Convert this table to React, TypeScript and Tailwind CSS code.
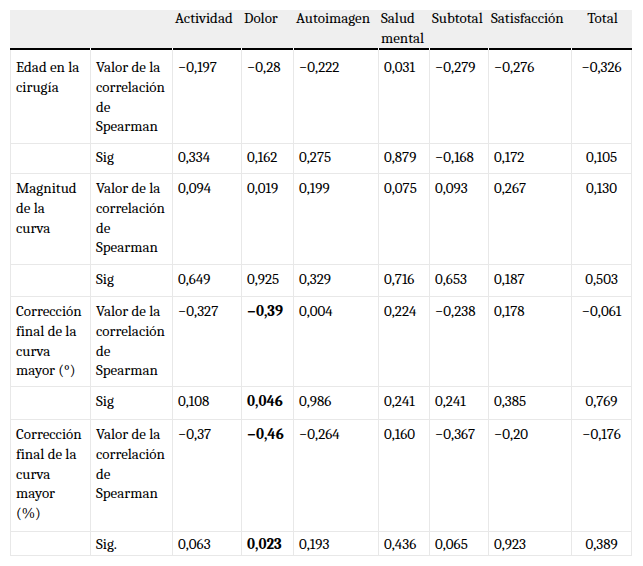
const COLS = [81, 82, 69, 52, 85, 51, 59, 83, 60]
const HEAD = [[], [], ['Actividad'], ['Dolor'], ['Autoimagen'], ['Salud', 'mental'], ['Subtotal'], ['Satisfacción'], ['Total']]
const KIND = ['Valor de la', 'correlación', 'de', 'Spearman']

type Row = {
  label: string[]
  kind: string[]
  vals: string[]
  bold?: boolean
  h: string
  pt: string
}

const ROWS: Row[] = [
  { label: ['Edad en la', 'cirugía'], kind: KIND, vals: ['−0,197', '−0,28', '−0,222', '0,031', '−0,279', '−0,276', '−0,326'], h: 'h-[94px]', pt: 'pt-[8px]' },
  { label: [], kind: ['Sig'], vals: ['0,334', '0,162', '0,275', '0,879', '−0,168', '0,172', '0,105'], h: 'h-[30px]', pt: 'pt-[4px]' },
  { label: ['Magnitud', 'de la', 'curva'], kind: KIND, vals: ['0,094', '0,019', '0,199', '0,075', '0,093', '0,267', '0,130'], h: 'h-[91px]', pt: 'pt-[5px]' },
  { label: [], kind: ['Sig'], vals: ['0,649', '0,925', '0,329', '0,716', '0,653', '0,187', '0,503'], h: 'h-[32px]', pt: 'pt-[5px]' },
  { label: ['Corrección', 'final de la', 'curva', 'mayor (°)'], kind: KIND, vals: ['−0,327', '−0,39', '0,004', '0,224', '−0,238', '0,178', '−0,061'], bold: true, h: 'h-[90px]', pt: 'pt-[5px]' },
  { label: [], kind: ['Sig'], vals: ['0,108', '0,046', '0,986', '0,241', '0,241', '0,385', '0,769'], bold: true, h: 'h-[33px]', pt: 'pt-[5px]' },
  { label: ['Corrección', 'final de la', 'curva', 'mayor', '(%)'], kind: KIND, vals: ['−0,37', '−0,46', '−0,264', '0,160', '−0,367', '−0,20', '−0,176'], bold: true, h: 'h-[112px]', pt: 'pt-[5px]' },
  { label: [], kind: ['Sig.'], vals: ['0,063', '0,023', '0,193', '0,436', '0,065', '0,923', '0,389'], bold: true, h: 'h-[24px]', pt: 'pt-[3px]' },
]

function Lines({ lines }: { lines: string[] }) {
  return (
    <>
      {lines.map((l, i) => (
        <div key={i} className="whitespace-nowrap">
          {l}
        </div>
      ))}
    </>
  )
}

export default function App() {
  return (
    <div className="min-h-[566px] bg-white pl-[10px] pt-[10px]">
      <table className="w-[622px] table-fixed border-separate border-spacing-0 font-serif text-[15px] text-black">
        <colgroup>
          {COLS.map((w, i) => (
            <col key={i} style={{ width: w }} />
          ))}
        </colgroup>
        <thead>
          <tr className="bg-[#efefef]">
            {HEAD.map((h, i) => (
              <th
                key={i}
                className={`h-[38px] p-0 pl-[2px] pr-[1px] align-top font-normal ${i === 8 ? 'text-center' : 'text-left'}`}
              >
                <div className="-mt-[2px] leading-[20px]">
                  <Lines lines={h} />
                </div>
              </th>
            ))}
          </tr>
          <tr>
            {COLS.map((_, i) => (
              <td key={i} className="h-[2px] p-0">
                <div className={`h-[2px] bg-black ${i === 8 ? '' : 'mr-[1px]'}`} />
              </td>
            ))}
          </tr>
        </thead>
        <tbody>
          {ROWS.map((r, ri) => (
            <tr key={ri}>
              <td className={`${r.h} ${r.pt} border-b border-l border-r border-[#e8e8e8] pl-[5px] align-top leading-[19.8px]`}>
                <Lines lines={r.label} />
              </td>
              <td className={`${r.h} ${r.pt} border-b border-r border-[#e8e8e8] pl-[5px] align-top leading-[19.8px]`}>
                <Lines lines={r.kind} />
              </td>
              {r.vals.map((v, vi) => (
                <td
                  key={vi}
                  className={`${r.h} ${r.pt} border-b border-r border-[#e8e8e8] align-top leading-[19.8px] whitespace-nowrap ${vi === 6 ? 'text-center' : 'pl-[5px]'} ${r.bold && vi === 1 ? 'font-bold' : ''}`}
                >
                  {v}
                </td>
              ))}
            </tr>
          ))}
        </tbody>
      </table>
    </div>
  )
}
